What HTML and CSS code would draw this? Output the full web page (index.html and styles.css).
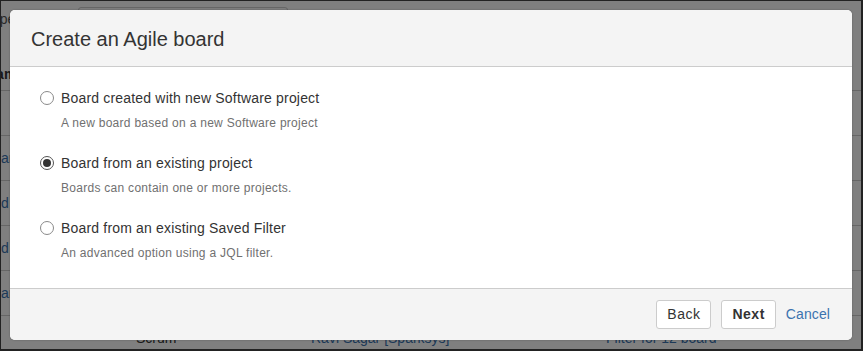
FILE: index.html
```html
<!DOCTYPE html>
<html lang="en">

<head>
    <meta charset="UTF-8">
    <title>Create an Agile board</title>
    <link rel="stylesheet" href="styles.css">
</head>

<body>
    <div class="screen">
        <!-- page behind the dialog -->
        <div class="page">
            <div class="toolbar">
                <span class="filter-label">Type</span>
                <div class="search"></div>
            </div>
            <div class="row head">
                <span class="cell first"><span class="cut-head">Name</span></span>
            </div>
            <div class="row">
                <span class="cell first"></span>
            </div>
            <div class="row">
                <span class="cell first link">ard</span>
            </div>
            <div class="row">
                <span class="cell first link">d</span>
            </div>
            <div class="row">
                <span class="cell first link">d</span>
            </div>
            <div class="row">
                <span class="cell first link">ard</span>
            </div>
            <div class="row">
                <span class="cell first link"></span>
                <span class="cell type">Scrum</span>
                <span class="cell admin link">Ravi Sagar [Sparksys]</span>
                <span class="cell filter link">Filter for 12 board</span>
            </div>
        </div>
        <div class="blanket"></div>

        <!-- dialog -->
        <div class="dialog">
            <div class="dialog-header">
                <h2>Create an Agile board</h2>
            </div>
            <div class="dialog-body">
                <div class="option">
                    <div class="option-label"><span class="radio"></span>Board created with new Software project</div>
                    <div class="option-desc">A new board based on a new Software project</div>
                </div>
                <div class="option">
                    <div class="option-label"><span class="radio checked"></span>Board from an existing project</div>
                    <div class="option-desc">Boards can contain one or more projects.</div>
                </div>
                <div class="option">
                    <div class="option-label"><span class="radio"></span>Board from an existing Saved Filter</div>
                    <div class="option-desc">An advanced option using a JQL filter.</div>
                </div>
            </div>
            <div class="dialog-footer">
                <button class="btn">Back</button>
                <button class="btn primary">Next</button>
                <a class="cancel" href="javascript:;">Cancel</a>
            </div>
        </div>
    </div>
</body>

</html>
```

FILE: styles.css
```css
* {
    margin: 0;
    padding: 0;
    box-sizing: border-box;
}

body {
    font-family: "Liberation Sans", Arial, sans-serif;
    color: #333;
    background: #fff;
}

.screen {
    width: 863px;
    height: 351px;
    border: 1px solid #222;
    border-right-width: 2px;
    border-bottom-width: 2px;
    position: relative;
    overflow: hidden;
    background: #fff;
}

/* page behind */
.page {
    font-size: 14px;
}

.toolbar {
    height: 45px;
    display: flex;
    align-items: flex-start;
    padding-top: 6px;
}

.filter-label {
    margin-left: -16px;
    margin-top: 4px;
    color: #555;
    width: 77px;
}

.search {
    width: 210px;
    height: 30px;
    border: 1px solid #ccc;
    border-radius: 3px;
    margin-left: 16px;
}

.row {
    height: 45px;
    border-bottom: 1px solid #ccc;
    display: flex;
    align-items: center;
    flex-shrink: 0;
}

.row.head {
    align-items: flex-end;
    padding-bottom: 8px;
    font-weight: bold;
}

.cut-head {
    margin-left: -15px;
}

.cell {
    white-space: nowrap;
}

.first {
    width: 135px;
}

.type {
    width: 175px;
}

.admin {
    width: 295px;
}

.link {
    color: #3b73af;
}

.blanket {
    position: absolute;
    inset: 0;
    background: rgba(0, 0, 0, 0.5);
}

/* dialog */
.dialog {
    position: absolute;
    left: 9px;
    top: 9px;
    width: 842px;
    height: 330px;
    background: #fff;
    border-radius: 5px;
    box-shadow: 0 0 2px rgba(0, 0, 0, 0.3);
    display: flex;
    flex-direction: column;
    overflow: hidden;
}

.dialog-header {
    height: 57px;
    background: #f4f4f4;
    border-bottom: 1px solid #ccc;
    display: flex;
    align-items: center;
    padding: 2px 21px 0;
}

.dialog-header h2 {
    font-size: 20px;
    font-weight: normal;
    color: #333;
}

.dialog-body {
    flex: 1;
    padding: 21px 30px 0;
}

.option {
    margin-bottom: 22px;
}

.option-label {
    font-size: 14px;
    line-height: 20px;
    letter-spacing: 0.18px;
    display: flex;
    align-items: center;
    color: #333;
}

.radio {
    width: 14px;
    height: 14px;
    border: 1px solid #8a8a8a;
    border-radius: 50%;
    background: #fff;
    margin-right: 7px;
    display: flex;
    align-items: center;
    justify-content: center;
}

.radio.checked {
    border-color: #555;
}

.radio.checked::after {
    content: "";
    width: 8px;
    height: 8px;
    border-radius: 50%;
    background: #333;
}

.option-desc {
    font-size: 12px;
    line-height: 16px;
    letter-spacing: 0.28px;
    color: #707070;
    margin: 7px 0 0 21px;
}

.dialog-footer {
    height: 52px;
    background: #f4f4f4;
    border-top: 1px solid #ccc;
    display: flex;
    align-items: center;
    justify-content: flex-end;
    padding: 0 22px 1px 0;
    gap: 10px;
}

.btn {
    font-family: "Liberation Sans", Arial, sans-serif;
    font-size: 14px;
    line-height: 20px;
    letter-spacing: 0.5px;
    height: 29px;
    padding: 0 10px;
    border: 1px solid #ccc;
    border-radius: 3px;
    background: #fff;
    color: #333;
}

.btn.primary {
    font-weight: bold;
}

.cancel {
    font-size: 14px;
    letter-spacing: 0.1px;
    color: #3b73af;
    text-decoration: none;
}
```
